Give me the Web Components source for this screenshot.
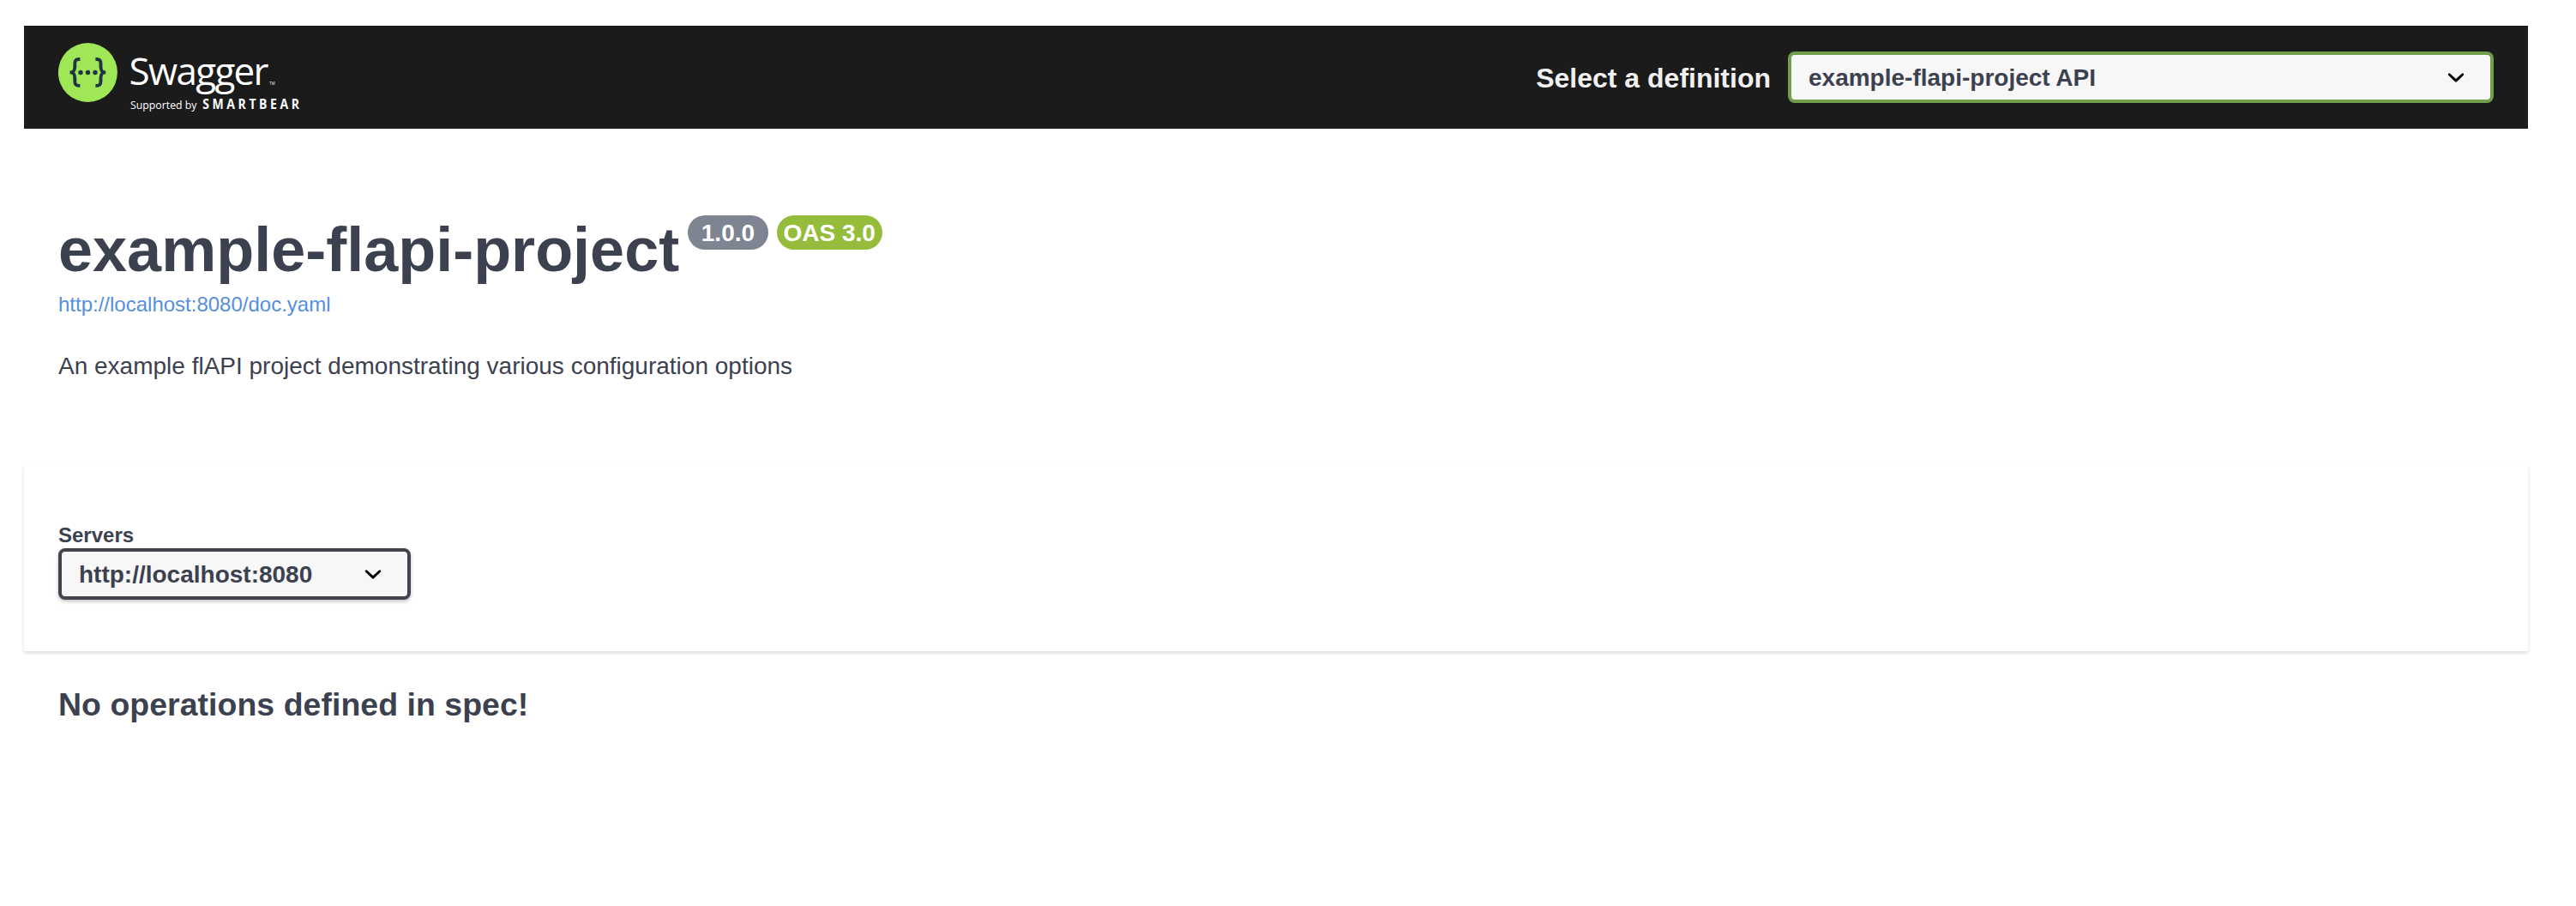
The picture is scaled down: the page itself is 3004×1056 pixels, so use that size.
<!DOCTYPE html>
<html lang="en">
<head>
<meta charset="utf-8">
<title>Swagger UI</title>
<style>
body { margin: 0; background: #fff; font-family: "Liberation Sans", Arial, Helvetica, sans-serif; color: #3c414f; }
</style>
</head>
<body>
<api-docs>
  <top-bar slot="top">
    <swagger-logo slot="logo"></swagger-logo>
    <span slot="label">Select a definition</span>
    <select-box slot="control" class="definition">example-flapi-project API</select-box>
  </top-bar>
  <api-info slot="info">
    <span slot="title">example-flapi-project</span>
    <version-badge slot="badges" style="--pad: 15.6px">1.0.0</version-badge>
    <version-badge slot="badges" style="--bg: #96bc3b; --pad: 7.8px">OAS 3.0</version-badge>
    <span slot="link">http://localhost:8080/doc.yaml</span>
    <span slot="description">An example flAPI project demonstrating various configuration options</span>
  </api-info>
  <server-panel slot="servers">
    <span slot="label">Servers</span>
    <select-box>http://localhost:8080</select-box>
  </server-panel>
  <empty-notice slot="operations">No operations defined in spec!</empty-notice>
</api-docs>
<script>
const define = (name, html) => customElements.define(name, class extends HTMLElement {
  constructor() {
    super();
    this.attachShadow({ mode: "open" }).innerHTML = html;
  }
});

define("api-docs", `
<style>
  :host { display: flex; flex-direction: column; box-sizing: border-box; min-height: 1056px; padding: 30px 56px 0 28px; }
</style>
<slot name="top"></slot><slot name="info"></slot><slot name="servers"></slot><slot name="operations"></slot>`);

define("top-bar", `
<style>
  :host { display: flex; align-items: center; justify-content: space-between; height: 120px; padding: 0 40px; background: #1b1b1b; }
  .picker { display: flex; align-items: center; gap: 20px; }
  .label { font: bold 32px/36px "Liberation Sans", Arial, sans-serif; color: #f0f0f0; padding-top: 2px; white-space: nowrap; }
  ::slotted(select-box) { width: 823px; --border: #719e4c; --shadow: none; }
</style>
<slot name="logo"></slot>
<div class="picker"><div class="label"><slot name="label"></slot></div><slot name="control"></slot></div>`);

define("swagger-logo", `
<style>
  :host { display: block; width: 300px; height: 120px; }
  svg { display: block; }
  text { font-family: "Open Sans", sans-serif; fill: #fff; }
</style>
<svg width="300" height="120" viewBox="68 30 300 120">
  <circle cx="102.4" cy="84.5" r="34.5" fill="#9fe757"/>
  <g fill="none" stroke="#1f3544" stroke-width="3.9">
    <path d="M93.4 69H92.2C88.2 69 87.3 71 87.3 74.2V77.6C87.3 82 86.4 84.4 81.6 84.4C86.4 84.4 87.3 86.9 87.3 91.2V94.6C87.3 98 88.2 99.9 92.2 99.9H93.4"/>
    <path d="M111.4 69H112.6C116.6 69 117.5 71 117.5 74.2V77.6C117.5 82 118.4 84.4 123.2 84.4C118.4 84.4 117.5 86.9 117.5 91.2V94.6C117.5 98 116.6 99.9 112.6 99.9H111.4"/>
  </g>
  <g fill="#1f3544">
    <circle cx="94" cy="84.5" r="2.7"/><circle cx="102.5" cy="84.5" r="2.7"/><circle cx="111" cy="84.5" r="2.7"/>
  </g>
  <text x="150.6" y="98.7" font-size="44" textLength="163">Swagger</text>
  <text x="314.3" y="98.6" font-size="4.4">TM</text>
  <text x="152" y="126.7" font-size="12.3" textLength="77.5">Supported by</text>
  <text transform="translate(236.3 126.5) scale(.86 1)" font-size="16.3" font-weight="700" textLength="131">SMARTBEAR</text>
</svg>`);

define("select-box", `
<style>
  :host { display: flex; justify-content: space-between; align-items: flex-start; box-sizing: border-box; width: 411px; height: 60px;
    padding: 11px 20px 0; border: 4px solid var(--border, #42444d); border-radius: 8px; background: #f7f7f7;
    box-shadow: var(--shadow, 0 2px 4px rgba(0,0,0,.25)); font: bold 28px/31px "Liberation Sans", Arial, sans-serif; color: #3c414f; white-space: nowrap; }
  svg { display: block; width: 40px; height: 40px; margin-top: -5px; }
</style>
<span><slot></slot></span>
<svg viewBox="0 0 20 20"><path d="M13.418 7.859a.695.695 0 01.978 0 .68.68 0 010 .969l-3.908 3.83a.697.697 0 01-.979 0l-3.908-3.83a.68.68 0 010-.969.695.695 0 01.978 0L10 11l3.418-3.141z"/></svg>`);

define("api-info", `
<style>
  :host { display: flex; flex-direction: column; padding: 101px 40px 0; }
  .head { display: flex; align-items: flex-start; height: 80px; }
  h2 { margin: 0 10px 0 0; font-size: 72px; line-height: 80px; white-space: nowrap; }
  .badges { display: flex; gap: 10px; }
  .link { margin-top: 10px; font-size: 24px; line-height: 27px; color: #568fdc; }
  p { margin: 43px 0 0; font-size: 28px; line-height: 31px; }
</style>
<div class="head"><h2><slot name="title"></slot></h2><div class="badges"><slot name="badges"></slot></div></div>
<div class="link"><slot name="link"></slot></div>
<p><slot name="description"></slot></p>`);

define("version-badge", `
<style>
  :host { display: block; box-sizing: border-box; height: 40px; padding: 5px var(--pad) 0; border-radius: 20px; background: var(--bg, #7e8491);
    font: bold 28px/31px "Liberation Sans", Arial, sans-serif; color: #fff; white-space: nowrap; }
</style>
<slot></slot>`);

define("server-panel", `
<style>
  :host { display: flex; flex-direction: column; box-sizing: border-box; height: 217px; margin-top: 100px; padding: 68px 40px 0;
    background: #fff; box-shadow: 0 2px 4px rgba(0,0,0,.15); }
  .label { margin-bottom: 2px; font-size: 24px; font-weight: bold; line-height: 27px; }
</style>
<div class="label"><slot name="label"></slot></div><slot></slot>`);

define("empty-notice", `
<style>
  :host { display: block; padding: 41px 40px 0; font-size: 37.44px; font-weight: bold; line-height: 42px; letter-spacing: .05px; }
</style>
<slot></slot>`);
</script>
</body>
</html>
